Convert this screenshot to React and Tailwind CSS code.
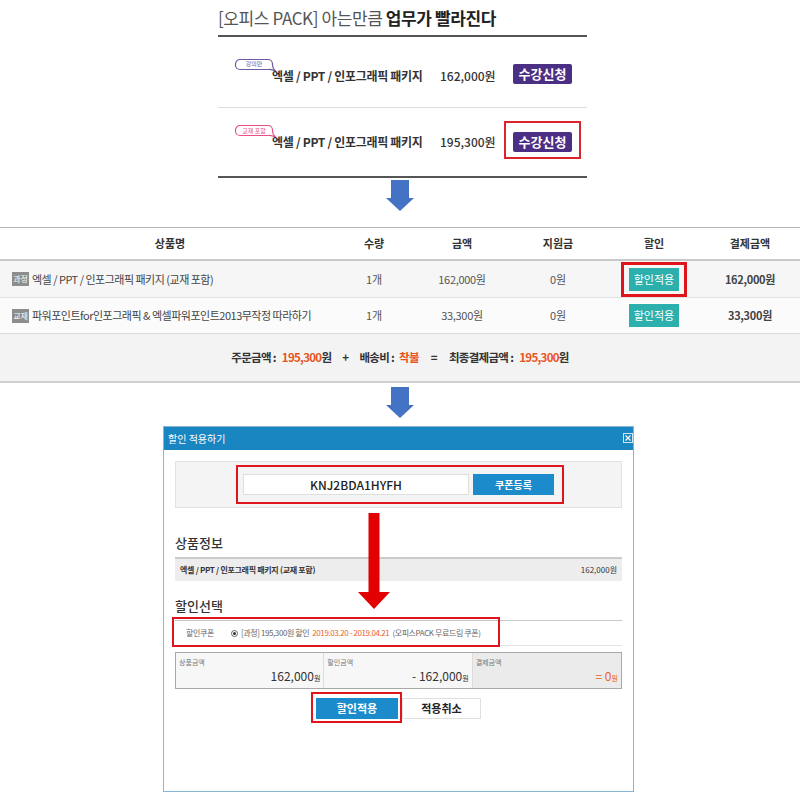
const FONT = "font-['Noto_Sans_CJK_KR','Noto_Sans',sans-serif]"

function DownArrow() {
  return (
    <svg width="30" height="32" viewBox="0 0 30 32" className="block mx-auto">
      <path d="M6 0H24V18H29L15 31L1 18H6Z" fill="#4472c4" />
    </svg>
  )
}

function Bubble({ label, color }) {
  return (
    <span className="absolute -left-[37px] -top-[9px] block w-[38px] h-[11px]">
      <svg width="42" height="16" viewBox="0 0 42 16" className="absolute left-0 top-0 overflow-visible">
        <path d="M5 0.5H33A4.5 4.5 0 0 1 37.5 5V6C37.5 8 38 9.5 40 11.5C37 11 35.5 10 34 10.5H5A4.5 4.5 0 0 1 0.5 6V5A4.5 4.5 0 0 1 5 0.5Z" fill="white" stroke={color} strokeWidth="1.2" />
      </svg>
      <span className="absolute left-0 w-[38px] top-0 h-[11px] flex items-center justify-center text-[6px] leading-none tracking-normal font-normal" style={{ color }}>{label}</span>
    </span>
  )
}

function PackRow({ badge, badgeColor, price, boxed, className, textClass }) {
  return (
    <div className={`flex items-center pl-[54px] ${className}`}>
      <div className={`relative w-[168px] text-[12px] leading-[16px] font-bold text-[#333] tracking-[-0.3px] ${textClass}`}>
        <Bubble label={badge} color={badgeColor} />
        엑셀 / PPT / 인포그래픽 패키지
      </div>
      <div className={`w-[73px] text-[12px] leading-[16px] font-medium text-[#333] ${textClass}`}>{price}</div>
      <div className="relative">
        <div className="w-[59px] h-[20px] bg-[#4b2f84] rounded-[2px] text-white text-[13px] font-bold flex items-center justify-center">수강신청</div>
        {boxed && <div className="absolute -left-[9px] -right-[9px] -top-[11px] -bottom-[7px] border-2 border-[#d9252b]"></div>}
      </div>
    </div>
  )
}

const COLS = 'grid grid-cols-[340px_68px_108px_84px_108px_84px_1fr] items-center'

function OrderRow({ tag, name, price, boxed, className }) {
  return (
    <div className={`${COLS} ${className}`}>
      <div className="flex items-center pl-[12px] text-[11px] text-[#444] tracking-[-0.5px] whitespace-nowrap">
        <span className="w-[17px] h-[14px] bg-[#8d8d8d] text-white text-[8px] tracking-normal flex items-center justify-center mr-[3px]">{tag}</span>
        {name}
      </div>
      <div className="text-center text-[11px] text-[#555]">1개</div>
      <div className="text-center text-[11px] text-[#555] tracking-[-0.3px]">{price}</div>
      <div className="text-center text-[11px] text-[#555]">0원</div>
      <div className="flex justify-center">
        <div className="relative">
          <div className="w-[50px] h-[23px] bg-[#2bb0ae] text-white text-[11px] flex items-center justify-center">할인적용</div>
          {boxed && <div className="absolute -left-[8px] -right-[8px] -top-[6px] -bottom-[6px] border-[3px] border-[#e0141b]"></div>}
        </div>
      </div>
      <div className="text-center text-[11px] font-bold text-[#444] tracking-[-0.3px]">{price}</div>
      <div></div>
    </div>
  )
}

function SumCell({ label, value, prefix, orange, className }) {
  return (
    <div className={`h-full flex flex-col px-[3px] pt-[4px] ${className}`}>
      <div className="text-[7px] text-[#777] leading-[10px]">{label}</div>
      <div className={`mt-auto pb-[1px] text-right text-[12px] leading-[18px] ${orange ? 'text-[#e8622c]' : 'text-[#333]'}`}>
        {prefix}{value}<span className="text-[7px]">원</span>
      </div>
    </div>
  )
}

export default function App() {
  return (
    <div className={`relative w-[800px] h-[794px] overflow-hidden bg-white ${FONT}`}>
      {/* 상단 패키지 */}
      <div className="ml-[218px] w-[369px]">
        <div className="h-[37px] pt-[6px] text-[17px] leading-[24px] text-[#555] border-b-2 border-[#555] tracking-[-0.4px] whitespace-nowrap">
          [오피스 PACK] 아는만큼 <b className="text-[#222]">업무가 빨라진다</b>
        </div>
        <PackRow badge="강의만" badgeColor="#6b5a9e" price="162,000원" textClass="mt-[3px]" className="h-[71px] pt-[4px] border-b border-[#ddd]" />
        <PackRow badge="교재 포함" badgeColor="#ea4f8c" price="195,300원" boxed className="h-[68px]" />
        <div className="border-b-2 border-[#555]"></div>
      </div>

      <div className="h-[49px] pt-[2px]"><DownArrow /></div>

      {/* 주문 테이블 */}
      <div className="border-t border-[#b5b5b5]">
        <div className={`${COLS} h-[33px] border-b-2 border-[#c9c9c9] text-[11px] font-bold text-[#333]`}>
          <div className="text-center">상품명</div>
          <div className="text-center">수량</div>
          <div className="text-center">금액</div>
          <div className="text-center">지원금</div>
          <div className="text-center">할인</div>
          <div className="text-center">결제금액</div>
          <div></div>
        </div>
        <OrderRow tag="과정" name="엑셀 / PPT / 인포그래픽 패키지 (교재 포함)" price="162,000원" boxed className="h-[37px] bg-[#f6f6f6] border-b border-[#e2e2e2]" />
        <OrderRow tag="교재" name="파워포인트for인포그래픽 & 엑셀파워포인트2013무작정 따라하기" price="33,300원" className="h-[36px] bg-[#fbfbfb] border-b border-[#d9d9d9]" />
        <div className="h-[49px] bg-[#f3f3f3] border-b-2 border-[#cfcfcf] flex items-center justify-center text-[11.5px] font-bold text-[#333] tracking-[-0.7px] whitespace-nowrap">
          <span>주문금액</span>
          <span className="ml-[2px]">:</span>
          <span className="ml-[6px] text-[#e8541e]">195,300</span>
          <span>원</span>
          <span className="mx-[11px]">+</span>
          <span>배송비</span>
          <span className="ml-[2px]">:</span>
          <span className="ml-[5px] text-[#e8541e]">착불</span>
          <span className="mx-[12px]">=</span>
          <span>최종결제금액</span>
          <span className="ml-[2px]">:</span>
          <span className="ml-[6px] text-[#e8541e]">195,300</span>
          <span>원</span>
        </div>
      </div>

      <div className="h-[43px] pt-[4px]"><DownArrow /></div>

      {/* 할인 적용 팝업 */}
      <div className="relative ml-[163px] w-[471px] h-[366px] border border-[#86b6d6] bg-white">
        <div className="relative h-[23px] bg-[#1985c1] flex items-center pl-[4px] text-[10px] text-white">
          할인 적용하기
          <div className="absolute right-[0px] top-[6px] w-[10px] h-[10px] border border-[#cfe6f4] flex items-center justify-center">
            <svg width="6" height="6" viewBox="0 0 6 6"><path d="M0.5 0.5L5.5 5.5M5.5 0.5L0.5 5.5" stroke="white" strokeWidth="1.2" /></svg>
          </div>
        </div>

        <div className="px-[11px] pt-[11px]">
          <div className="h-[47px] bg-[#f4f4f4] border border-[#e2e2e2] flex items-center justify-center">
            <div className="relative flex items-center gap-[4px]">
              <div className="w-[226px] h-[21px] bg-white border border-[#dedede] flex items-center justify-center text-[12px] font-medium text-[#222]">KNJ2BDA1HYFH</div>
              <div className="w-[81px] h-[21px] bg-[#1b8bcc] text-white text-[10px] font-bold flex items-center justify-center">쿠폰등록</div>
              <div className="absolute -left-[7px] -right-[10px] -top-[9px] -bottom-[9px] border-2 border-[#e0141b]"></div>
            </div>
          </div>

          <div className="mt-[25px] h-[20px] text-[13px] leading-[20px] font-medium text-[#333]">상품정보</div>
          <div className="mt-[4px] h-[24px] bg-[#ededed] border-t-2 border-[#cbcbcb] flex items-center justify-between px-[5px] text-[8px] text-[#333]">
            <span className="font-bold tracking-[-0.3px]">엑셀 / PPT / 인포그래픽 패키지 (교재 포함)</span>
            <span>162,000원</span>
          </div>

          <div className="mt-[15px] h-[20px] text-[13px] leading-[20px] font-medium text-[#333]">할인선택</div>
          <div className="relative mt-[4px] h-[26px] border-t border-b border-[#c9c9c9] border-b-[#e3e3e3] flex items-center pl-[11px] text-[8px] text-[#666] tracking-[-0.4px] whitespace-nowrap">
            <span className="w-[45px]">할인쿠폰</span>
            <span className="w-[7px] h-[7px] rounded-full border border-[#666] flex items-center justify-center mr-[3px]">
              <span className="w-[3px] h-[3px] rounded-full bg-[#333]"></span>
            </span>
            [과정] 195,300원 할인
            <span className="text-[#e8622c] ml-[3px]">2019.03.20 - 2019.04.21</span>
            <span className="ml-[3px]">(오피스PACK 무료드림 쿠폰)</span>
            <div className="absolute -left-[3px] w-[328px] -top-[4px] -bottom-[2px] border-2 border-[#e0141b]"></div>
          </div>

          <div className="mt-[6px] h-[37px] border border-[#a9a9a9] grid grid-cols-3">
            <SumCell label="상품금액" value="162,000" className="bg-[#f7f7f7] border-r border-[#dcdcdc]" />
            <SumCell label="할인금액" value="162,000" prefix="- " className="bg-[#f7f7f7] border-r border-[#dcdcdc]" />
            <SumCell label="결제금액" value="0" prefix="= " orange className="bg-[#ebebeb]" />
          </div>

          <div className="mt-[9px] flex justify-center gap-[4px]">
            <div className="relative">
              <div className="w-[82px] h-[21px] bg-[#1b8bcc] text-white text-[11px] font-bold flex items-center justify-center">할인적용</div>
              <div className="absolute -left-[5px] -right-[4px] -top-[6px] -bottom-[4px] border-2 border-[#e0141b]"></div>
            </div>
            <div className="w-[79px] h-[21px] bg-white border border-[#e0e0e0] text-[#222] text-[11px] font-bold flex items-center justify-center">적용취소</div>
          </div>
        </div>
      </div>

      {/* 빨간 화살표 */}
      <svg width="32" height="97" viewBox="0 0 32 97" className="absolute left-[358px] top-[513px]">
        <path d="M10.5 0H21.5V79H32L16 96L0 79H10.5Z" fill="#e30000" />
      </svg>
    </div>
  )
}
